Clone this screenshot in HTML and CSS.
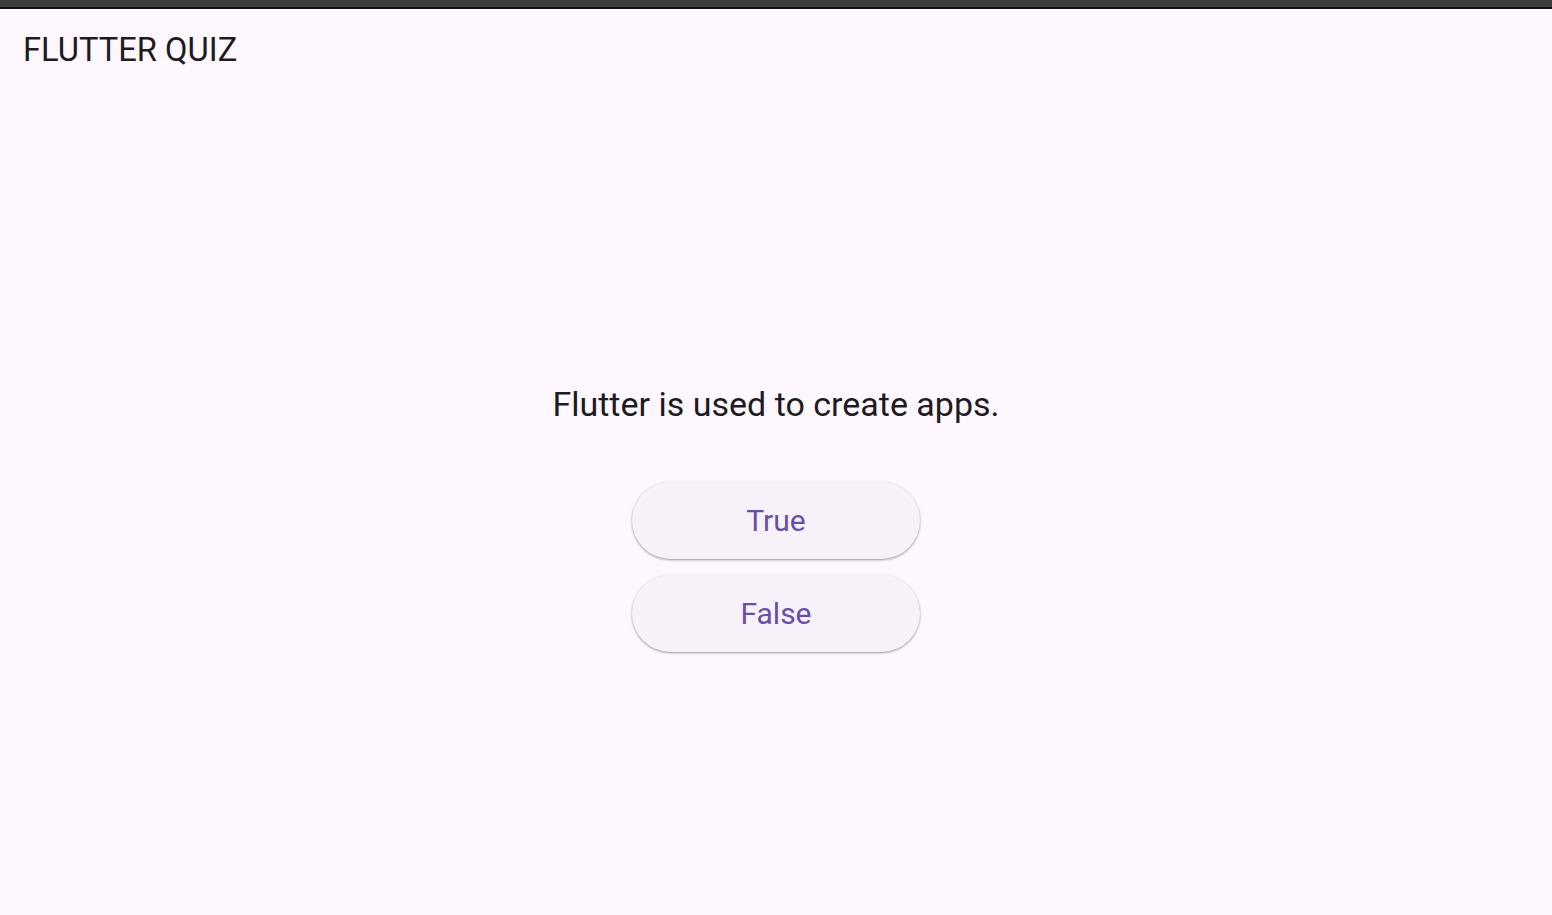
FILE: index.html
```html
<!DOCTYPE html>
<html>
<head>
<meta charset="utf-8">
<link rel="stylesheet" href="styles.css">
</head>
<body>
<div class="topbar"></div>
<div class="app">
  <header class="appbar"><h1 class="title">FLUTTER QUIZ</h1></header>
  <main class="content">
    <div class="quiz">
      <p class="question">Flutter is used to create apps.</p>
      <div class="answers">
        <button class="answer">True</button>
        <button class="answer">False</button>
      </div>
    </div>
  </main>
</div>
</body>
</html>
```
FILE: styles.css
```css
html, body {
  margin: 0;
  padding: 0;
  height: 100%;
}
body {
  background: #fef7ff;
  font-family: Roboto, "Liberation Sans", sans-serif;
  color: #1d1b20;
  display: flex;
  flex-direction: column;
}
.topbar {
  height: 7px;
  background: #3c3c3c;
  border-bottom: 2px solid #111;
  flex: none;
}
.app {
  flex: 1;
  display: flex;
  flex-direction: column;
}
.appbar {
  height: 83px;
  display: flex;
  align-items: center;
  padding: 0 23px;
  flex: none;
}
.title {
  margin: 0;
  font-size: 32.7px;
  font-weight: 400;
  line-height: 1;
}
.content {
  flex: 1;
  display: flex;
  align-items: center;
  justify-content: center;
}
.quiz {
  display: flex;
  flex-direction: column;
  align-items: center;
  margin-top: 32px;
}
.question {
  margin: 0 0 61px;
  font-size: 34px;
  line-height: 1;
}
.answers {
  display: flex;
  flex-direction: column;
  gap: 16px;
}
.answer {
  width: 288px;
  height: 77px;
  border: none;
  border-radius: 38.5px;
  background: #f7f2fa;
  color: #6750a4;
  font-family: Roboto, "Liberation Sans", sans-serif;
  font-size: 30px;
  font-weight: 400;
  box-shadow: 0 1px 2px rgba(0,0,0,0.3), 0 1px 3px 1px rgba(0,0,0,0.08);
  cursor: pointer;
}
```
